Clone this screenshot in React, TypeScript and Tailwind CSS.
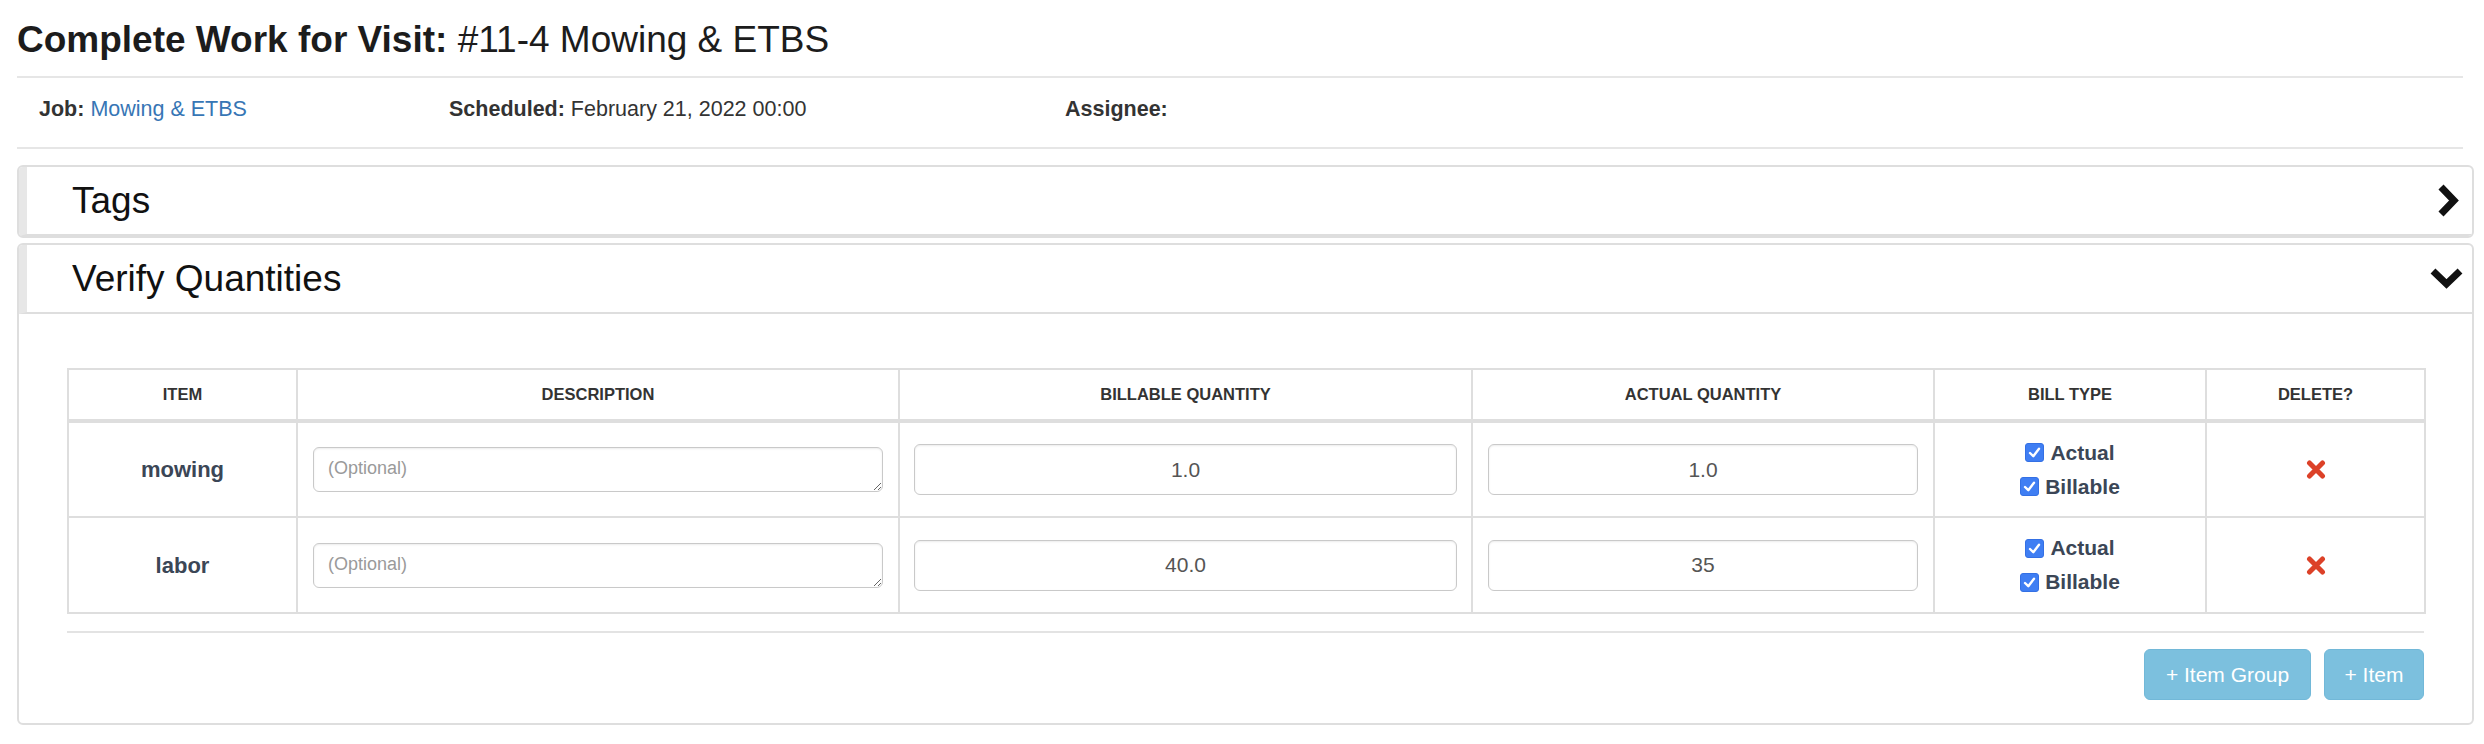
import React from "react";

const COLS = [229, 602, 573, 462, 272, 219];
const HEADERS = ["Item", "Description", "Billable Quantity", "Actual Quantity", "Bill Type", "Delete?"];

const ROWS = [
  { item: "mowing", billable: "1.0", actual: "1.0" },
  { item: "labor", billable: "40.0", actual: "35" },
];

function ChevronRight() {
  return (
    <svg width="26" height="35" viewBox="0 0 26 35">
      <polyline points="6,4 19,17.5 6,31" fill="none" stroke="#111" strokeWidth="7" strokeLinejoin="miter" />
    </svg>
  );
}

function ChevronDown() {
  return (
    <svg width="35" height="25" viewBox="0 0 35 25">
      <polyline points="4,5 17.5,18 31,5" fill="none" stroke="#111" strokeWidth="7" strokeLinejoin="miter" />
    </svg>
  );
}

function Check({ label }: { label: string }) {
  return (
    <div className="flex items-center justify-center gap-[6px] h-[34px]">
      <span className="w-[19px] h-[19px] rounded-[3px] bg-[#3f7ef3] border border-[#3470e4] flex items-center justify-center">
        <svg width="13" height="13" viewBox="0 0 13 13">
          <polyline points="2,7 5.3,10.2 11,2.8" fill="none" stroke="#fff" strokeWidth="2.4" strokeLinecap="round" strokeLinejoin="round" />
        </svg>
      </span>
      <span className="text-[21px] font-bold text-[#3b4656]">{label}</span>
    </div>
  );
}

function RemoveIcon() {
  return (
    <svg width="20" height="19" viewBox="0 0 20 19">
      <path d="M3.5 3 L16.5 16 M16.5 3 L3.5 16" stroke="#dc4128" strokeWidth="5" strokeLinecap="round" />
    </svg>
  );
}

export default function App() {
  return (
    <div className="w-[2484px] h-[744px] overflow-hidden bg-white pl-[17px] pr-[10px] font-['Liberation_Sans',Arial,sans-serif] text-[#333]">
      <h1 className="pt-[20px] text-[37px] leading-[40px] text-[#1c1c1c]">
        <span className="font-bold">Complete Work for Visit:</span> #11-4 Mowing &amp; ETBS
      </h1>
      <div className="mt-[16px] mr-[11px] border-t-2 border-[#e6e6e6]" />

      <div className="mt-[16px] pl-[22px] grid grid-cols-[410px_616px_1fr] h-[30px] text-[21.5px] leading-[30px]">
        <div>
          <span className="font-bold">Job:</span> <span className="text-[#3776b5]">Mowing &amp; ETBS</span>
        </div>
        <div>
          <span className="font-bold">Scheduled:</span> February 21, 2022 00:00
        </div>
        <div>
          <span className="font-bold">Assignee:</span>
        </div>
      </div>
      <div className="mt-[23px] mr-[11px] border-t-2 border-[#e6e6e6]" />

      {/* Tags panel (collapsed) */}
      <div className="mt-[16px] border-2 border-[#dedede] rounded-[6px] overflow-hidden">
        <div className="h-[69px] flex items-center justify-between border-l-[8px] border-l-[#e7e7e7] border-b-2 border-b-[#dedede] pl-[45px] pr-[11px]">
          <span className="text-[37px] leading-[40px] text-[#111]">Tags</span>
          <ChevronRight />
        </div>
      </div>

      {/* Verify Quantities panel */}
      <div className="mt-[5px] border-2 border-[#dedede] rounded-[6px] overflow-hidden">
        <div className="h-[69px] flex items-center justify-between border-l-[8px] border-l-[#e7e7e7] border-b-2 border-b-[#dedede] pl-[45px] pr-[8px]">
          <span className="text-[37px] leading-[40px] text-[#111]">Verify Quantities</span>
          <ChevronDown />
        </div>

        <div className="pt-[54px] px-[48px] pb-[23px]">
          <table className="w-full border-collapse table-fixed">
            <colgroup>
              {COLS.map((w, i) => (
                <col key={i} style={{ width: w }} />
              ))}
            </colgroup>
            <thead>
              <tr className="h-[52px]">
                {HEADERS.map((h) => (
                  <th
                    key={h}
                    className="border-2 border-b-4 border-[#dedede] text-center uppercase font-bold text-[16.5px] text-[#333]"
                  >
                    {h}
                  </th>
                ))}
              </tr>
            </thead>
            <tbody>
              {ROWS.map((r) => (
                <tr key={r.item} className="h-[96px]">
                  <td className="border-2 border-[#dedede] text-center text-[22px] font-bold text-[#3b4656]">{r.item}</td>
                  <td className="border-2 border-[#dedede] px-[15px]">
                    <textarea
                      placeholder="(Optional)"
                      className="block w-full h-[45px] border border-[#c9c9c9] rounded-[6px] px-[14px] pt-[7px] text-[18px] leading-[26px] text-[#555] placeholder:text-[#9a9a9a] shadow-[inset_0_1px_2px_rgba(0,0,0,0.08)] outline-none"
                    />
                  </td>
                  <td className="border-2 border-[#dedede] px-[14px]">
                    <input
                      defaultValue={r.billable}
                      className="block w-full h-[51px] border border-[#c9c9c9] rounded-[6px] text-center text-[21px] text-[#555] shadow-[inset_0_1px_2px_rgba(0,0,0,0.08)] outline-none"
                    />
                  </td>
                  <td className="border-2 border-[#dedede] px-[15px]">
                    <input
                      defaultValue={r.actual}
                      className="block w-full h-[51px] border border-[#c9c9c9] rounded-[6px] text-center text-[21px] text-[#555] shadow-[inset_0_1px_2px_rgba(0,0,0,0.08)] outline-none"
                    />
                  </td>
                  <td className="border-2 border-[#dedede]">
                    <Check label="Actual" />
                    <Check label="Billable" />
                  </td>
                  <td className="border-2 border-[#dedede]">
                    <div className="flex justify-center">
                      <RemoveIcon />
                    </div>
                  </td>
                </tr>
              ))}
            </tbody>
          </table>

          <div className="mt-[17px] border-t-2 border-[#e3e3e3]" />
          <div className="mt-[16px] flex justify-end gap-[13px]">
            <button className="w-[167px] h-[51px] rounded-[6px] bg-[#7cc0de] border border-[#72b8d8] text-white text-[21px]">
              + Item Group
            </button>
            <button className="w-[100px] h-[51px] rounded-[6px] bg-[#7cc0de] border border-[#72b8d8] text-white text-[21px]">
              + Item
            </button>
          </div>
        </div>
      </div>
    </div>
  );
}
